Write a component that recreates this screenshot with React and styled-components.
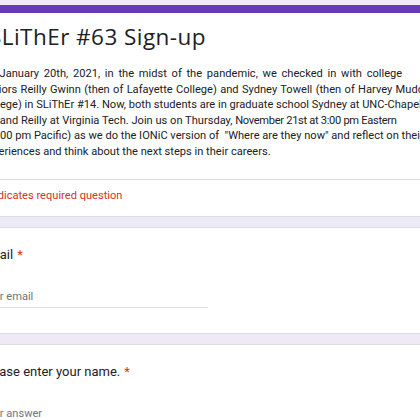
import React from 'react'
import styled, { createGlobalStyle } from 'styled-components'

const GlobalStyle = createGlobalStyle`
  html, body {
    margin: 0;
    padding: 0;
    background-color: #ede9f6;
    overflow: hidden;
    font-family: Roboto, "Liberation Sans", Arial, sans-serif;
    color: #202124;
  }
`

// each line of the form description, as it wraps in the card
const descriptionLines = [
  { text: 'On January 20th, 2021, in the midst of the pandemic, we checked in with college', wordSpacing: 2 },
  { text: 'seniors Reilly Gwinn (then of Lafayette College) and Sydney Towell (then of Harvey Mudd', wordSpacing: 0.6 },
  { text: 'College) in SLiThEr #14. Now, both students are in graduate school Sydney at UNC-Chapel' },
  { text: 'Hill and Reilly at Virginia Tech. Join us on Thursday, ', tail: 'November 21st at 3:00 pm Eastern' },
  { text: '(12:00 pm Pacific) as we do the IONiC version of  "Where are they now" and reflect on their' },
  { text: 'experiences and think about the next steps in their careers.' },
]

const questions = [
  { id: 'email', title: 'Email', placeholder: 'Your email' },
  { id: 'name', title: 'Please enter your name.', placeholder: 'Your answer' },
]

export default function App() {
  return (
    <>
      <GlobalStyle />
      <Page>
        <HeaderCard>
          <TopBar />
          <HeaderBody>
            <Title>SLiThEr #63 Sign-up</Title>
            <Description>
              {descriptionLines.map((line) => (
                <DescLine key={line.text} $wordSpacing={line.wordSpacing || 0}>
                  {line.text}
                  {line.tail && <Squeezed>{line.tail}</Squeezed>}
                </DescLine>
              ))}
            </Description>
          </HeaderBody>
          <RequiredNote>* Indicates required question</RequiredNote>
        </HeaderCard>

        {questions.map((q) => (
          <QuestionCard key={q.id}>
            <QuestionTitle>
              {q.title}
              <Star>*</Star>
            </QuestionTitle>
            <AnswerField>{q.placeholder}</AnswerField>
          </QuestionCard>
        ))}
      </Page>
    </>
  )
}

const Page = styled.div`
  width: 512px;
  margin-left: -39px;
  padding-top: 5px;
`

const Card = styled.div`
  background-color: #fff;
  border: 1px solid #dadce0;
  border-radius: 6px;
  margin-bottom: 10px;
`

const HeaderCard = styled(Card)`
  border-top: none;
  overflow: hidden;
`

const TopBar = styled.div`
  height: 8px;
  background-color: #673ab7;
`

const HeaderBody = styled.div`
  padding: 10px 19px 20px;
`

const Title = styled.h1`
  margin: 0 0 0 8px;
  font-family: "Open Sans", Roboto, sans-serif;
  font-size: 22.5px;
  line-height: 28px;
  font-weight: 400;
  letter-spacing: 0.45px;
  color: #202124;
  white-space: nowrap;
`

const Description = styled.div`
  margin-top: 15px;
  font-size: 11.1px;
  line-height: 15.5px;
  color: #202124;
`

const DescLine = styled.div`
  white-space: pre;
  word-spacing: ${(p) => p.$wordSpacing}px;
`

const Squeezed = styled.span`
  letter-spacing: -0.3px;
`

const RequiredNote = styled.div`
  border-top: 1px solid #dadce0;
  padding: 8px 19px 12px;
  font-size: 11.1px;
  line-height: 15.5px;
  color: #d93025;
`

const QuestionCard = styled(Card)`
  padding: 18px 19px 25px;
`

const QuestionTitle = styled.div`
  font-size: 13px;
  line-height: 18px;
  color: #202124;
  white-space: nowrap;
`

const Star = styled.span`
  color: #d93025;
  margin-left: 4px;
`

const AnswerField = styled.div`
  margin-top: 25px;
  width: 227px;
  padding-bottom: 3px;
  border-bottom: 1px solid #e0e0e0;
  font-size: 11.1px;
  line-height: 15.5px;
  color: #70757a;
`
